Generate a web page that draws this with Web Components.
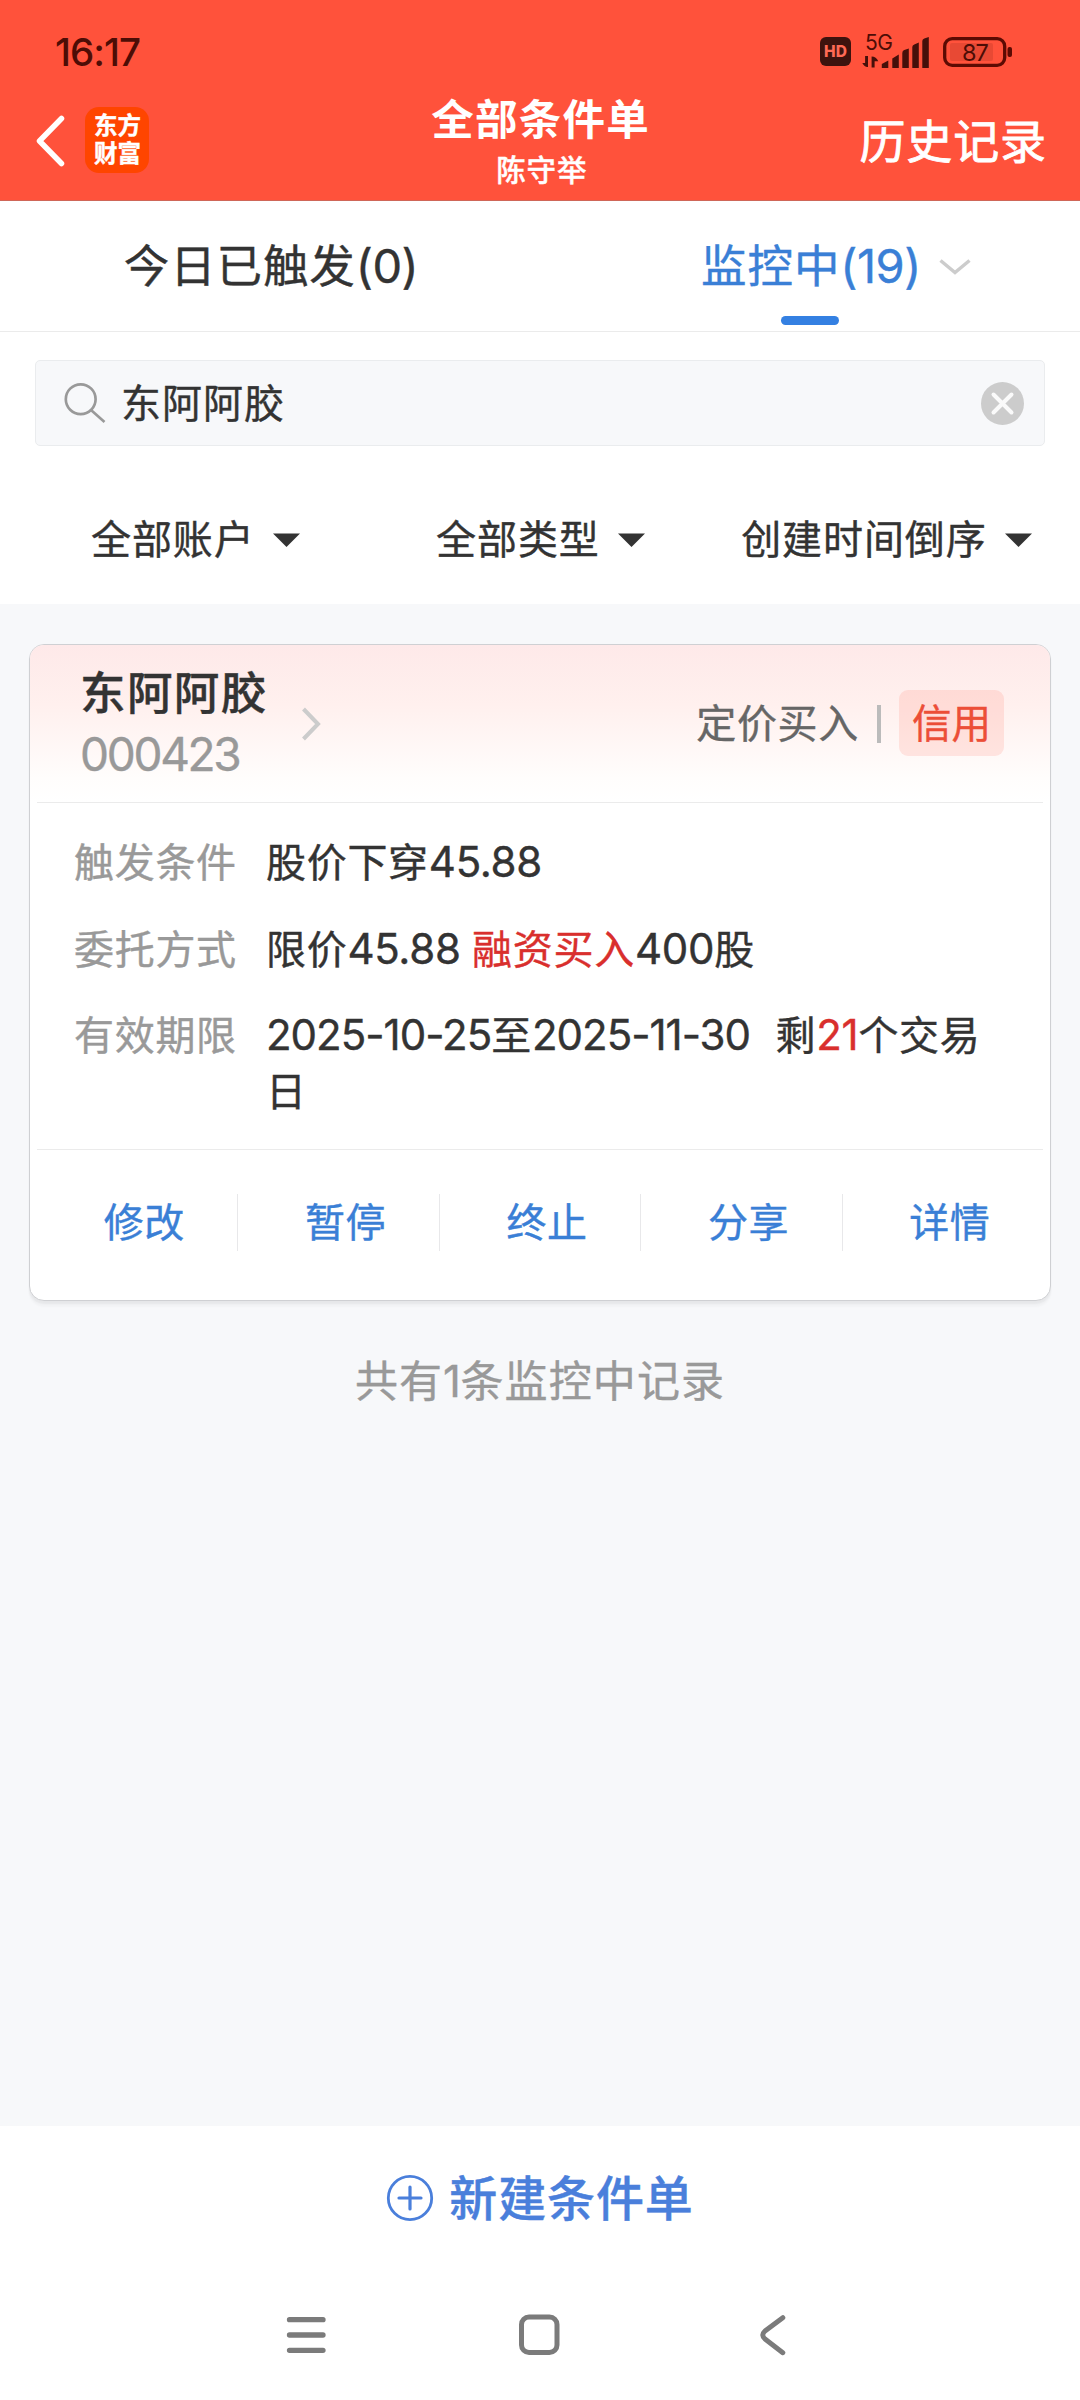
<!DOCTYPE html>
<html lang="zh-CN">
<head>
<meta charset="utf-8">
<meta name="viewport" content="width=device-width">
<title>全部条件单</title>
<style>
html,body{margin:0;padding:0}
body{width:1080px;height:2400px;overflow:hidden;background:#f7f8fa;color:#333;font-family:"Noto Sans CJK SC","Noto Sans",sans-serif;-webkit-text-stroke-width:.4px}
</style>
</head>
<body>
<order-app></order-app>
<script>
const BASE = `*{box-sizing:border-box}svg{display:block;flex:none}
.n{font-family:Inter,"Noto Sans CJK SC",sans-serif}`;

function define(name, css, html) {
  const t = document.createElement('template');
  t.innerHTML = `<style>${BASE}${css}</style>${html}`;
  customElements.define(name, class extends HTMLElement {
    constructor() {
      super();
      this.attachShadow({ mode: 'open' }).appendChild(t.content.cloneNode(true));
    }
  });
}

define('status-bar', `
:host{display:flex;justify-content:space-between;height:90px;padding:14px 66px 0 55px;color:#4d0d06;-webkit-text-stroke-width:0}
.time{font:500 38.5px/76px Inter,sans-serif;letter-spacing:-1px}
.right{display:flex;padding-top:18px}
.hd{width:31px;height:29px;margin-top:5px;border-radius:6px;background:#3d130e;color:#ff6a55;font:800 15.5px/29px Inter,sans-serif;text-align:center}
.sig{width:68px;margin-left:11px;display:grid}
.sig>*{grid-area:1/1}
.g5{font:400 21px/21px Inter,sans-serif;padding-left:3px;letter-spacing:-.5px}
.bat{display:grid;width:71px;height:30px;margin:5px 0 0 13px}
.bat>*{grid-area:1/1}
.bat span{font:400 23.5px/31px Inter,sans-serif;width:64px;text-align:center;letter-spacing:-1px}
`, `
<div class="time">16:17</div>
<div class="right">
 <div class="hd">HD</div>
 <div class="sig">
  <svg width="68" height="36" viewBox="861.7 32 68 36" fill="#45100a">
   <path d="M881.5 68V64L888 60.5V68zM892 68V58.5L898.5 54.5V68zM902 68V53Q902 50.5 904 50L908.5 48.5V68zM912 68V47Q912 45 914 44.5L918.500 42.500V68zM922 68V41Q922 39 924 38.500L928.500 37V68z"/>
   <path d="M867.700 56V67Q864.500 67.500 862 63H864.800V56zM871.300 67.500V56.500Q876 56.500 878 61.200H874.300V67.500z"/>
  </svg>
  <div class="g5">5G</div>
 </div>
 <div class="bat">
  <svg width="71" height="30" viewBox="0 0 71 30"><rect x="7" y="6" width="43" height="18" rx="2" fill="#4d0d06" opacity=".13"/><rect x="1.700" y="1.700" width="60" height="26.600" rx="7.500" fill="none" stroke="#5c0b03" stroke-width="3.300"/><rect x="64.500" y="10" width="4.500" height="10" rx="2" fill="#5c0b03"/></svg>
  <span>87</span>
 </div>
</div>`);

define('nav-header', `
:host{display:grid;grid-template-columns:1fr auto 1fr;height:111px;border-bottom:1px solid #cf6658;color:#fff}
.l{display:flex;padding:17px 0 0 35px}
.logo{width:64px;height:66px;margin-left:20px;border-radius:14px;background:#ff4500;font-weight:700;font-size:23.5px;line-height:28px;padding:3px 7px 0 8px;text-align:center;word-break:break-all}
.c{text-align:center;display:flex;flex-direction:column;align-items:center;-webkit-text-stroke-width:0}
.t{font-weight:700;font-size:42.5px;line-height:54px;letter-spacing:1.3px;margin-right:-1.300px}
.s{font-weight:500;font-size:29.500px;line-height:46px;letter-spacing:.9px;margin:1px -3.500px 0 0;-webkit-text-stroke-width:.4px}
.r{font-size:46px;line-height:96px;letter-spacing:.9px;text-align:right;padding-right:33px;-webkit-text-stroke-width:.8px}
`, `
<div class="l"><svg width="30" height="66" viewBox="35 107 30 66"><path d="M61.500 118.500L39.500 141L61.500 163.500" fill="none" stroke="#fff" stroke-width="5.500" stroke-linecap="round" stroke-linejoin="round"/></svg>
<div class="logo">东方财富</div></div>
<div class="c"><div class="t">全部条件单</div><div class="s">陈守举</div></div>
<div class="r">历史记录</div>`);

define('tab-row', `
:host{display:grid;grid-template-columns:1fr 1fr;height:131px;background:#fff;border-bottom:1px solid #ebebeb;font-size:45.500px;line-height:124px;text-align:center}
.t{letter-spacing:.9px;padding-left:2px}.n{font-size:47px;letter-spacing:-.5px}
.on{color:#3a7fd6;display:grid;grid-template-columns:1fr auto 1fr;grid-template-rows:115px 9px;justify-items:center}
.on svg{justify-self:start;margin:56px 0 0 17px}
.bar{grid-column:1/4;width:58px;height:9px;border-radius:5px;background:#3480e2}
`, `
<div class="t">今日已触发<span class="n">(0)</span></div>
<div class="on"><i></i><div class="t">监控中<span class="n">(19)</span></div>
<svg width="34" height="18" viewBox="938 257 34 18"><path d="M940.500 260.500L955 272.500L969.500 260.500" fill="none" stroke="#ccc" stroke-width="3.500"/></svg>
<div class="bar"></div></div>`);

define('search-box', `
:host{display:flex;align-items:center;height:86px;margin:0 35px;padding:0 20px 0 27px;background:#f7f8fa;border:1px solid #eaecee;border-radius:5px;font-size:40px;line-height:84px;letter-spacing:1px;box-sizing:border-box}
span{flex:1;padding-left:15px;margin-top:-5px}
`, `
<svg width="43" height="43" viewBox="63 381.5 43 43"><g fill="none" stroke="#999" stroke-width="2.700"><circle cx="80.700" cy="398.700" r="14.900"/><path d="M91 409.500L104.500 421.500"/></g></svg>
<span>东阿阿胶</span>
<svg width="43" height="43" viewBox="-21.500 -21.500 43 43"><circle r="21.500" fill="#ccc"/><path d="M-9-9L9 9M9-9L-9 9" stroke="#fafafa" stroke-width="4" stroke-linecap="round"/></svg>`);

define('filter-item', `
:host{display:flex;align-items:center;font-size:40px;letter-spacing:.9px;line-height:60px;white-space:nowrap}
svg{margin:5px 0 0 18.500px}
`, `<slot></slot><svg width="27" height="14" viewBox="0 0 27 14"><path d="M0 .5H27L13.500 14z" fill="#333"/></svg>`);

define('filter-row', `
:host{display:flex;padding:61px 0 37px 91px}
filter-item:nth-of-type(2){margin-left:136px}
filter-item:nth-of-type(3){margin-left:96px}
`, `<filter-item>全部账户</filter-item><filter-item>全部类型</filter-item><filter-item>创建时间倒序</filter-item>`);

define('info-row', `
:host{display:flex;font-size:40px;line-height:55.500px;letter-spacing:.7px}
.k{flex:none;width:192px;color:#999}
.v{flex:1}
`, `<div class="k"><slot name="label"></slot></div><div class="v"><slot></slot></div>`);

define('card-action', `
:host{display:flex;flex:1;justify-content:center;height:57px;padding-left:14px;border-right:1px solid #e8e8ea;color:#3a7fd6;font-size:40px;line-height:52px;letter-spacing:.5px}
:host(:last-child){border-right:0}
`, `<slot></slot>`);

define('order-card', `
:host{display:block;width:1022px;height:657px;margin:40px 0 0 29px;background:#fff;border:1px solid #cfd0d3;border-radius:15px;box-shadow:0 3px 2px rgba(0,0,0,.045),0 6px 2px rgba(0,0,0,.025);overflow:hidden}
.top{display:flex;align-items:center;height:157px;padding:0 46px 0 50px;background:linear-gradient(#fee9e9,#fff0ee 38%,#fffdfc 85%,#fff)}
.id{width:189px}
.name{font-weight:500;font-size:45.500px;line-height:60px;letter-spacing:1.400px;margin-top:-3px}
hr{border:0;height:1px;background:#ebebeb;margin:0 7px}
.top svg{margin-left:32px}
.kind{margin-left:auto;color:#666;font-size:40px;letter-spacing:.7px;line-height:60px;margin-top:-5px}
.sep{width:4px;height:38px;background:#bbb;margin:0 18px 0 18px}
.tag{width:105px;height:66px;margin-top:-1px;border-radius:9px;background:rgba(255,82,59,.13);color:#ec4e37;font-size:39.500px;line-height:62px;text-align:center}
.info{padding:30px 60px 0 44px;height:346px}
info-row+info-row{margin-top:31px}
.n{font-size:42px;letter-spacing:-.3px;line-height:40px}
.d{letter-spacing:-1px}
.left{margin-left:4px}
.code{font-size:46px;line-height:60px;color:#999;letter-spacing:-2.300px;margin-top:4px}
.red{color:#d92f2d}
.acts{display:flex;padding:44px 7px 0}
`, `
<div class="top">
 <div class="id"><div class="name">东阿阿胶</div><div class="n code">000423</div></div>
 <svg width="20" height="36" viewBox="300 706 20 36"><path d="M302.500 709L317 724L302.500 739" fill="none" stroke="#ccc" stroke-width="4"/></svg>
 <div class="kind">定价买入</div><div class="sep"></div><div class="tag">信用</div>
</div>
<hr>
<div class="info">
 <info-row><span slot="label">触发条件</span>股价下穿<span class="n">45.88</span></info-row>
 <info-row><span slot="label">委托方式</span>限价<span class="n">45.88 </span><span class="red">融资买入</span><span class="n">400</span>股</info-row>
 <info-row><span slot="label">有效期限</span><span class="n d">2025-10-25</span>至<span class="n d">2025-11-30&nbsp; </span><span class="left">剩</span><span class="n red">21</span>个交易<span>日</span></info-row>
</div>
<hr>
<div class="acts"><card-action>修改</card-action><card-action>暂停</card-action><card-action>终止</card-action><card-action>分享</card-action><card-action>详情</card-action></div>`);

define('create-bar', `
:host{display:flex;justify-content:center;align-items:center;height:144px;color:#4a7fdb;font-weight:500;font-size:48px;letter-spacing:.9px;line-height:70px}
span{margin:-6px 0 0 15px}
`, `<svg width="48" height="48" viewBox="-24 -24 48 48"><g fill="none" stroke="#4a7fdb" stroke-width="2.800"><circle r="21.700"/><path d="M-11 0H11M0-11V11" stroke-linecap="round" stroke-width="3.200"/></g></svg><span>新建条件单</span>`);

define('system-nav', `
:host{display:flex;padding:41px 0 0 284px;height:130px}
svg+svg{margin-left:188px}svg+svg+svg{margin-left:190px}
`, `
<svg width="44" height="48" viewBox="284 2311 44 48"><path d="M289.500 2319.700H323M289.500 2335H323M289.500 2350.300H323" stroke="#7b7b7b" stroke-width="5.300" stroke-linecap="round"/></svg>
<svg width="46" height="48" viewBox="516 2311 46 48"><rect x="521.500" y="2317" width="35.500" height="35.500" rx="7.500" fill="none" stroke="#7b7b7b" stroke-width="5"/></svg>
<svg width="36" height="48" viewBox="752 2311 36 48"><path d="M782.800 2317.700L765 2331Q760.500 2335 765 2339L782.800 2352.700" fill="none" stroke="#7b7b7b" stroke-width="5" stroke-linecap="round" stroke-linejoin="round"/></svg>`);

define('order-app', `
:host{display:flex;flex-direction:column;width:1080px;height:2400px}
.head{background:#ff523b}
.filters{background:#fff;padding-top:28px;height:272px}
.empty{margin-top:44px;text-align:center;color:#999;font-size:43px;line-height:66px;letter-spacing:1.100px}
.empty .n{font-size:44px;letter-spacing:-.5px;line-height:50px}
.foot{margin-top:auto;background:#fff;height:274px}
`, `
<div class="head"><status-bar></status-bar><nav-header></nav-header></div>
<tab-row></tab-row>
<div class="filters"><search-box></search-box><filter-row></filter-row></div>
<order-card></order-card>
<div class="empty">共有<span class="n">1</span>条监控中记录</div>
<div class="foot"><create-bar></create-bar><system-nav></system-nav></div>`);
</script>
</body>
</html>
